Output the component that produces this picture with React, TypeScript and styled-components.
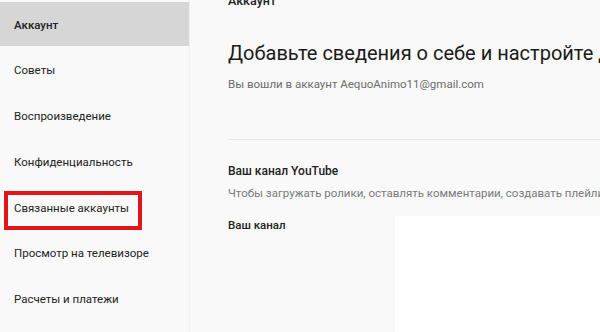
import styled, { createGlobalStyle } from 'styled-components';

const GlobalStyle = createGlobalStyle`
    body {
        margin: 0;
        background: #f9f9f9;
        font-family: Roboto, "Noto Sans", "Liberation Sans", sans-serif;
        color: #212121;
    }
`

const menu = [
    'Аккаунт',
    'Советы',
    'Воспроизведение',
    'Конфиденциальность',
    'Связанные аккаунты',
    'Просмотр на телевизоре',
    'Расчеты и платежи',
]

interface ItemProps {
    active?: boolean;
}

const App = () => {
    return (
        <Page>
            <GlobalStyle/>
            <Sidebar>
                {menu.map((label, index) => (
                    <NavItem key={label} active={index === 0}>
                        {label}
                        {index === 4 && <Marker/>}
                    </NavItem>
                ))}
            </Sidebar>
            <Main>
                <PageTitle>Аккаунт</PageTitle>
                <Heading>Добавьте сведения о себе и настройте доступ к аккаунту</Heading>
                <Signed>Вы вошли в аккаунт AequoAnimo11@gmail.com</Signed>
                <Divider/>
                <SectionTitle>Ваш канал YouTube</SectionTitle>
                <SectionText>Чтобы загружать ролики, оставлять комментарии, создавать плейлисты и многое другое, нужен канал.</SectionText>
                <Row>
                    <RowLabel>Ваш канал</RowLabel>
                    <ChannelCard/>
                </Row>
            </Main>
        </Page>
    )
}

const Page = styled.div`
    display: flex;
    width: 600px;
    height: 332px;
    overflow: hidden;
    background: #f9f9f9;
`
const Sidebar = styled.nav`
    width: 190px;
    flex-shrink: 0;
    padding-top: 2px;
    box-sizing: border-box;
    border-right: 1px solid #f0f0f0;
    display: flex;
    flex-direction: column;
    gap: 1.8px;
`
const NavItem = styled.div<ItemProps>`
    position: relative;
    height: 44px;
    display: flex;
    align-items: center;
    padding: 1px 0 0 14px;
    box-sizing: border-box;
    font-size: 11.5px;
    font-weight: ${props => props.active ? 500 : 400};
    color: #222;
    background: ${props => props.active ? '#d6d6d6' : 'transparent'};
    white-space: nowrap;
`
const Marker = styled.span`
    position: absolute;
    left: 4px;
    top: 6px;
    width: 138px;
    height: 39px;
    box-sizing: border-box;
    border: 4px solid #e3151c;
`
const Main = styled.main`
    flex: 1;
    min-width: 0;
    padding-left: 38px;
    display: flex;
    flex-direction: column;
    overflow: hidden;
    white-space: nowrap;
`
const PageTitle = styled.h2`
    margin: -7px 0 0;
    font-size: 12.5px;
    line-height: 16px;
    font-weight: 500;
`
const Heading = styled.h1`
    margin: 32px 0 0;
    font-size: 20px;
    line-height: 24px;
    font-weight: 400;
    color: #1a1a1a;
`
const Signed = styled.p`
    margin: 12px 0 0;
    font-size: 11.5px;
    line-height: 14px;
    color: #6b6b6b;
`
const Divider = styled.hr`
    margin: 48px 0 0;
    border: none;
    border-top: 1px solid #e6e6e6;
    height: 0;
`
const SectionTitle = styled.h3`
    margin: 23px 0 0;
    font-size: 12px;
    line-height: 16px;
    font-weight: 500;
`
const SectionText = styled.p`
    margin: 6px 0 0;
    font-size: 11.5px;
    line-height: 16px;
    color: #7a7a7a;
`
const Row = styled.div`
    margin-top: 15px;
    display: flex;
    align-items: flex-start;
    flex: 1;
`
const RowLabel = styled.div`
    width: 167px;
    flex-shrink: 0;
    padding-top: 2px;
    font-size: 11.5px;
    line-height: 14px;
    font-weight: 500;
`
const ChannelCard = styled.div`
    flex: 1;
    align-self: stretch;
    background: #ffffff;
`

export default App
